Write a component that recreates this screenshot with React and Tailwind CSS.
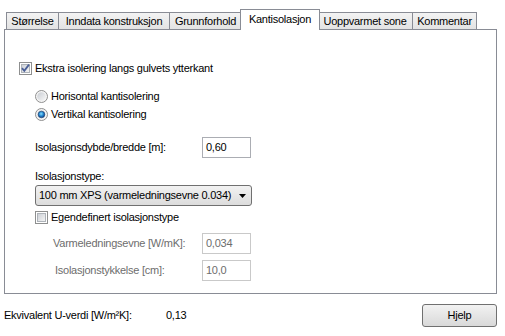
import React from 'react';

const TABS = [
  { label: 'Størrelse', w: 53 },
  { label: 'Inndata konstruksjon', w: 112 },
  { label: 'Grunnforhold', w: 73 },
  { label: 'Kantisolasjon', w: 80, active: true },
  { label: 'Uoppvarmet sone', w: 96 },
  { label: 'Kommentar', w: 65 },
];

function Checkbox({ checked }) {
  return (
    <svg width="13" height="13" viewBox="0 0 13 13" className="shrink-0">
      <defs>
        <linearGradient id={`cb${checked ? 1 : 0}`} x1="0" y1="0" x2="1" y2="1">
          <stop offset="0" stopColor="#cbcfd5" />
          <stop offset="1" stopColor="#f6f6f6" />
        </linearGradient>
      </defs>
      <rect x="0.5" y="0.5" width="12" height="12" fill="#fff" stroke="#8e8f8f" />
      <rect x="2.5" y="2.5" width="8" height="8" fill={`url(#cb${checked ? 1 : 0})`} stroke="#aeb3b9" />
      {checked && (
        <path d="M3 6.2 L5.3 8.8 L10 2.6" fill="none" stroke="#4a5f97" strokeWidth="1.8" />
      )}
    </svg>
  );
}

function Radio({ checked }) {
  return (
    <svg width="13" height="13" viewBox="0 0 13 13" className="shrink-0">
      <defs>
        <linearGradient id="rb" x1="0" y1="0" x2="1" y2="1">
          <stop offset="0" stopColor="#c9cdd3" />
          <stop offset="1" stopColor="#f7f7f7" />
        </linearGradient>
        <radialGradient id="rdot" cx="0.45" cy="0.4" r="0.6">
          <stop offset="0" stopColor="#8ee0fb" />
          <stop offset="0.5" stopColor="#2a8fd6" />
          <stop offset="1" stopColor="#0d3f86" />
        </radialGradient>
      </defs>
      <circle cx="6.5" cy="6.5" r="6" fill="#f4f4f4" stroke="#8f8f8f" />
      <circle cx="6.5" cy="6.5" r="4.3" fill="url(#rb)" />
      {checked && <circle cx="6.5" cy="6.5" r="3.3" fill="url(#rdot)" stroke="#1c3f6e" strokeWidth="0.6" />}
    </svg>
  );
}

function TextBox({ value, disabled }) {
  return (
    <div
      className={`ml-auto w-[49px] h-[21px] flex items-center px-[3px] border bg-white ${
        disabled ? 'border-[#c9c9c9] text-[#6d6d6d]' : 'border-[#abadb3] text-black'
      }`}
    >
      {value}
    </div>
  );
}

export default function App() {
  return (
    <div
      className="w-[505px] h-[336px] bg-white text-black text-[11px] tracking-[-0.25px] leading-[13px] overflow-hidden"
      style={{ fontFamily: '"Liberation Sans", Arial, sans-serif' }}
    >
      {/* Tab strip */}
      <div className="flex items-end h-[29px] pl-[6px]">
        {TABS.map((t, i) =>
          t.active ? (
            <div
              key={t.label}
              style={{ width: t.w }}
              className="relative z-10 h-[21px] mx-[-2px] mb-[-1px] bg-white border border-b-0 border-[#898c95] flex items-start justify-center pt-[3px]"
            >
              {t.label}
            </div>
          ) : (
            <div
              key={t.label}
              style={{ width: t.w }}
              className={`h-[17px] bg-gradient-to-b from-[#f3f3f3] to-[#e3e3e3] border border-b-0 border-[#898c95] flex items-center justify-center ${
                i > 0 ? 'ml-[-1px]' : ''
              }`}
            >
              {t.label}
            </div>
          )
        )}
      </div>

      {/* Panel */}
      <div className="ml-[4px] w-[493px] h-[265px] border border-[#898c95] bg-white flex flex-col pl-[14px]">
        <div className="mt-[32px] flex items-center gap-[3px] h-[13px]">
          <Checkbox checked />
          <span>Ekstra isolering langs gulvets ytterkant</span>
        </div>

        <div className="pl-[16px] flex flex-col">
          <div className="mt-[15px] flex items-center gap-[3px] h-[13px]">
            <Radio />
            <span>Horisontal kantisolering</span>
          </div>
          <div className="mt-[5px] flex items-center gap-[3px] h-[13px]">
            <Radio checked />
            <span>Vertikal kantisolering</span>
          </div>

          <div className="mt-[16px] flex items-center w-[216px]">
            <span>Isolasjonsdybde/bredde [m]:</span>
            <TextBox value="0,60" />
          </div>

          <div className="mt-[12px] h-[13px]">Isolasjonstype:</div>

          <div className="mt-[2px] w-[217px] h-[21px] rounded-[3px] border border-[#707070] bg-gradient-to-b from-[#f2f2f2] to-[#dcdcdc] flex items-center pl-[3px] pr-[5px]">
            <span className="flex-1">100 mm XPS (varmeledningsevne 0.034)</span>
            <svg width="7" height="4" viewBox="0 0 7 4">
              <path d="M0 0 H7 L3.5 4 Z" fill="#000" />
            </svg>
          </div>

          <div className="mt-[5px] flex items-center gap-[3px] h-[13px]">
            <Checkbox />
            <span>Egendefinert isolasjonstype</span>
          </div>

          <div className="mt-[9px] flex items-center w-[216px] text-[#6d6d6d]">
            <span className="pl-[18px]">Varmeledningsevne [W/mK]:</span>
            <TextBox value="0,034" disabled />
          </div>
          <div className="mt-[6px] flex items-center w-[216px] text-[#6d6d6d]">
            <span className="pl-[20px]">Isolasjonstykkelse [cm]:</span>
            <TextBox value="10,0" disabled />
          </div>
        </div>
      </div>

      {/* Footer */}
      <div className="mt-[10px] flex items-center pl-[4px] pr-[8px]">
        <span className="w-[162px]">Ekvivalent U-verdi [W/m²K]:</span>
        <span>0,13</span>
        <button className="ml-auto w-[75px] h-[23px] rounded-[3px] border border-[#707070] bg-gradient-to-b from-[#f2f2f2] to-[#d9d9d9] text-[11px] tracking-[-0.25px]">
          Hjelp
        </button>
      </div>
    </div>
  );
}
